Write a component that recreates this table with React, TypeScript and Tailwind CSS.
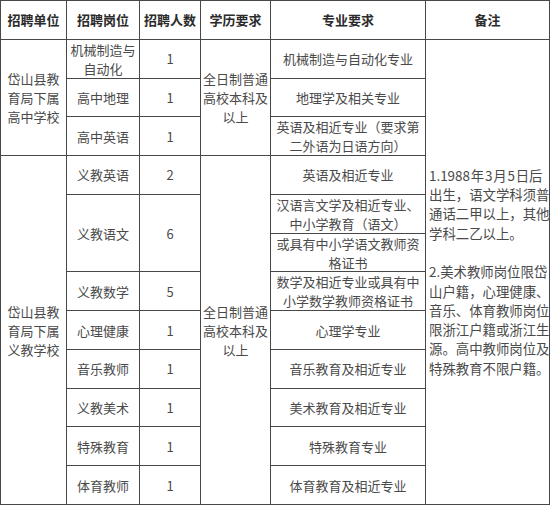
import React from "react";

// Recruitment table: 6 columns, header + 12 body rows
const cell = "bg-white flex items-center justify-center text-center";

const posts = [
  { name: ["机械制造与", "自动化"], count: "1", row: "row-start-2" },
  { name: ["高中地理"], count: "1", row: "row-start-3" },
  { name: ["高中英语"], count: "1", row: "row-start-4" },
  { name: ["义教英语"], count: "2", row: "row-start-5" },
  { name: ["义教语文"], count: "6", row: "row-start-6 row-span-2" },
  { name: ["义教数学"], count: "5", row: "row-start-8" },
  { name: ["心理健康"], count: "1", row: "row-start-9" },
  { name: ["音乐教师"], count: "1", row: "row-start-10" },
  { name: ["义教美术"], count: "1", row: "row-start-11" },
  { name: ["特殊教育"], count: "1", row: "row-start-12" },
  { name: ["体育教师"], count: "1", row: "row-start-13" },
];

const majors = [
  ["机械制造与自动化专业"],
  ["地理学及相关专业"],
  ["英语及相近专业（要求第", "二外语为日语方向）"],
  ["英语及相近专业"],
  ["汉语言文学及相近专业、", "中小学教育（语文）"],
  ["或具有中小学语文教师资", "格证书"],
  ["数学及相近专业或具有中", "小学数学教师资格证书"],
  ["心理学专业"],
  ["音乐教育及相近专业"],
  ["美术教育及相近专业"],
  ["特殊教育专业"],
  ["体育教育及相近专业"],
];

const remarks = [
  "1.1988\u200a年\u200a3\u200a月\u200a5\u200a日后",
  "出生，语文学科须普",
  "通话二甲以上，其他",
  "学科二乙以上。",
  "",
  "2.美术教师岗位限岱",
  "山户籍，心理健康、",
  "音乐、体育教师岗位",
  "限浙江户籍或浙江生",
  "源。高中教师岗位及",
  "特殊教育不限户籍。",
];

function Lines({ lines }: { lines: string[] }) {
  return (
    <div>
      {lines.map((l, i) => (
        <div key={i} className="whitespace-nowrap">
          {l}
        </div>
      ))}
    </div>
  );
}

export default function App() {
  const headers = ["招聘单位", "招聘岗位", "招聘人数", "学历要求", "专业要求", "备注"];

  return (
    <div
      className="w-[550px] h-[505px] bg-white"
      style={{ fontFamily: '"Noto Sans CJK SC", "Noto Sans", sans-serif' }}
    >
      <div className="grid h-full grid-cols-[65px_72px_60px_69px_154px_123px] grid-rows-[repeat(13,minmax(0,1fr))] gap-px bg-[#474747] p-px text-[13px] leading-[19px] text-[#4a4a4a]">
        {headers.map((h) => (
          <div key={h} className={`${cell} row-start-1 font-bold text-[#2b2b2b]`}>
            {h}
          </div>
        ))}

        {/* 招聘单位 */}
        <div className={`${cell} col-start-1 row-start-2 row-span-3`}>
          <Lines lines={["岱山县教", "育局下属", "高中学校"]} />
        </div>
        <div className={`${cell} col-start-1 row-start-5 row-span-9`}>
          <Lines lines={["岱山县教", "育局下属", "义教学校"]} />
        </div>

        {/* 招聘岗位 + 人数 */}
        {posts.map((p, i) => (
          <React.Fragment key={i}>
            <div className={`${cell} col-start-2 ${p.row}`}>
              <Lines lines={p.name} />
            </div>
            <div className={`${cell} col-start-3 ${p.row}`}>{p.count}</div>
          </React.Fragment>
        ))}

        {/* 学历要求 */}
        <div className={`${cell} col-start-4 row-start-2 row-span-3`}>
          <Lines lines={["全日制普通", "高校本科及", "以上"]} />
        </div>
        <div className={`${cell} col-start-4 row-start-5 row-span-9`}>
          <Lines lines={["全日制普通", "高校本科及", "以上"]} />
        </div>

        {/* 专业要求 */}
        {majors.map((m, i) => (
          <div key={i} className={`${cell} col-start-5`} style={{ gridRowStart: i + 2 }}>
            <Lines lines={m} />
          </div>
        ))}

        {/* 备注 */}
        <div className="col-start-6 row-start-2 row-span-12 flex flex-col justify-center bg-white pl-[3px] text-[13.4px] leading-[19.3px]">
          {remarks.map((r, i) => (
            <div key={i} className="h-[19.3px] whitespace-nowrap">
              {r}
            </div>
          ))}
        </div>
      </div>
    </div>
  );
}
